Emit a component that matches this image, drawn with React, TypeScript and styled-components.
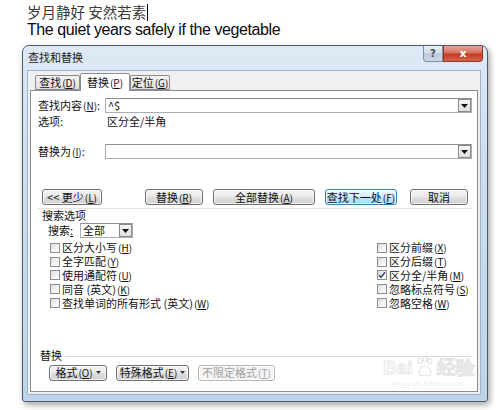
import React from 'react';
import styled, { createGlobalStyle } from 'styled-components';

const GlobalStyle = createGlobalStyle`
  html, body {
    margin: 0;
    padding: 0;
    background: #fff;
  }
  body {
    font-family: "Noto Sans CJK SC", "Liberation Sans", sans-serif;
    color: #000;
    line-height: 13px;
  }
`;

const Page = styled.div`
  position: relative;
  width: 500px;
  height: 410px;
  overflow: hidden;
  box-sizing: border-box;
  padding: 3px 0 0 22px;
`;

const Poem = styled.div`
  display: flex;
  align-items: center;
  margin-left: 5px;
  height: 18px;
  font-size: 14.5px;
  line-height: 18px;
  color: #3a3a3a;
`;

const Caret = styled.span`
  display: inline-block;
  width: 1px;
  height: 17px;
  margin-left: 1px;
  background: #000;
`;

const Subtitle = styled.div`
  margin-left: 5px;
  height: 17px;
  font-family: "Liberation Sans", Arial, sans-serif;
  font-size: 16px;
  line-height: 17px;
  color: #0a0a0a;
  letter-spacing: -0.42px;
`;

const Dialog = styled.div`
  display: flex;
  flex-direction: column;
  box-sizing: border-box;
  width: 466px;
  height: 357px;
  margin-top: 7px;
  padding: 0 6px 6px 4px;
  border: 1px solid #4d5b6a;
  border-radius: 7px 7px 3px 3px;
  background: linear-gradient(180deg, #dfe9f5 0%, #cddff1 30%, #bed4eb 100%);
  box-shadow: 2px 3px 6px rgba(0, 0, 0, 0.35);
`;

const TitleBar = styled.div`
  display: flex;
  align-items: flex-start;
  height: 24px;
`;

const TitleText = styled.span`
  margin: 5px 0 0 1px;
  font-size: 11px;
  line-height: 13px;
  color: #1a1a1a;
`;

const Controls = styled.div`
  display: flex;
  margin-left: auto;
  margin-right: -2px;
`;

const CaptionButton = styled.div<{ $close?: boolean }>`
  display: flex;
  align-items: center;
  justify-content: center;
  width: ${({ $close }) => ($close ? '40px' : '20px')};
  height: 16px;
  box-sizing: border-box;
  border: 1px solid ${({ $close }) => ($close ? '#8d3a2c' : '#7f8fa3')};
  border-top: none;
  border-radius: ${({ $close }) => ($close ? '0 0 4px 0' : '0 0 0 4px')};
  background: ${({ $close }) =>
    $close
      ? 'linear-gradient(180deg, #e8a598 0%, #d7705e 45%, #c43b22 55%, #d2654c 100%)'
      : 'linear-gradient(180deg, #e9eef5 0%, #d3dce8 45%, #bfcadb 55%, #cfd8e6 100%)'};
  color: ${({ $close }) => ($close ? '#fff' : '#3a4a5e')};
  font-family: "DejaVu Sans", sans-serif;
  font-weight: bold;
  font-size: ${({ $close }) => ($close ? '11px' : '10px')};
`;

const Client = styled.div`
  flex: 1;
  display: flex;
  flex-direction: column;
  padding: 0 2px 2px 2px;
  border: 1px solid #9fb2c7;
  background: #f0f0f0;
`;

const TabStrip = styled.div`
  display: flex;
  align-items: flex-end;
  height: 19px;
  margin-left: 5px;
  position: relative;
  z-index: 1;
`;

const Tab = styled.div<{ $w: number; $active?: boolean }>`
  display: flex;
  align-items: center;
  justify-content: center;
  box-sizing: border-box;
  width: ${({ $w }) => $w}px;
  height: ${({ $active }) => ($active ? '18px' : '15px')};
  margin-bottom: ${({ $active }) => ($active ? '-1px' : '0')};
  border: 1px solid #898c95;
  border-bottom: ${({ $active }) => ($active ? 'none' : '1px solid #898c95')};
  border-radius: 2px 2px 0 0;
  background: ${({ $active }) =>
    $active ? '#fff' : 'linear-gradient(180deg, #f3f3f3 0%, #ebebeb 50%, #dcdcdc 100%)'};
  font-size: 11px;
  color: #111;
  white-space: nowrap;
`;

const Panel = styled.div`
  display: flex;
  flex-direction: column;
  box-sizing: border-box;
  height: 302px;
  padding: 0 5px 11px 7px;
  border: 1px solid #898c95;
  background: #fff;
`;

const Row = styled.div<{ $mt: number; $h?: number; $pl?: number }>`
  display: flex;
  align-items: center;
  margin-top: ${({ $mt }) => $mt}px;
  height: ${({ $h }) => $h ?? 15}px;
  padding-left: ${({ $pl }) => $pl ?? 0}px;
  font-size: 11px;
  color: #111;
`;

const Label = styled.span<{ $w: number }>`
  width: ${({ $w }) => $w}px;
  flex-shrink: 0;
  white-space: nowrap;
`;

const Combo = styled.div<{ $w?: number }>`
  display: flex;
  align-items: center;
  box-sizing: border-box;
  ${({ $w }) => ($w ? `width: ${$w}px;` : 'flex: 1;')}
  height: 15px;
  padding-left: 2px;
  border: 1px solid #abadb3;
  border-top-color: #8e9096;
  background: #fff;
  font-size: 11px;
`;

const ComboText = styled.span`
  flex: 1;
`;

const DropButton = styled.div`
  display: flex;
  align-items: center;
  justify-content: center;
  box-sizing: border-box;
  width: 13px;
  height: 13px;
  border: 1px solid #8a8a8a;
  background: linear-gradient(180deg, #f6f6f6, #dedede);
`;

const Button = styled.div<{ $w: number; $ml: number; $kind?: 'default' | 'disabled' }>`
  display: flex;
  align-items: center;
  justify-content: center;
  gap: 3px;
  box-sizing: border-box;
  width: ${({ $w }) => $w}px;
  height: 16px;
  margin-left: ${({ $ml }) => $ml}px;
  border: 1px solid
    ${({ $kind }) => ($kind === 'default' ? '#3c7fb1' : $kind === 'disabled' ? '#b5b8bb' : '#707070')};
  border-radius: 3px;
  background: ${({ $kind }) =>
    $kind === 'default'
      ? 'linear-gradient(180deg, #eaf6fd 0%, #d9f0fc 45%, #bee6fd 55%, #a7d9f5 100%)'
      : $kind === 'disabled'
        ? '#f4f4f4'
        : 'linear-gradient(180deg, #f2f2f2 0%, #ebebeb 45%, #dddddd 55%, #cfcfcf 100%)'};
  box-shadow: inset 0 0 0 1px rgba(255, 255, 255, 0.7);
  font-size: 11px;
  color: ${({ $kind }) => ($kind === 'disabled' ? '#a2a2a2' : '#111')};
  white-space: nowrap;
`;

const Separator = styled.div`
  margin-top: 3px;
  height: 1px;
  background: #e2e2e2;
`;

const GroupLabel = styled.div`
  height: 12px;
  margin-left: 4px;
  font-size: 11px;
  line-height: 12px;
  color: #111;
`;

const CheckGrid = styled.div`
  display: grid;
  grid-template-columns: 327px 1fr;
  grid-auto-flow: column;
  grid-template-rows: repeat(5, 13.8px);
  margin-top: 3px;
  padding-left: 12px;
`;

const CheckItem = styled.label`
  display: flex;
  align-items: center;
  gap: 2px;
  font-size: 11px;
  line-height: 13px;
  color: #111;
  white-space: nowrap;
`;

const Box = styled.span`
  display: flex;
  align-items: center;
  justify-content: center;
  box-sizing: border-box;
  width: 10px;
  height: 10px;
  border: 1px solid #8f8f8f;
  background: linear-gradient(135deg, #dcdcdc 0%, #f4f4f4 60%, #fff 100%);
`;

const BottomSection = styled.div`
  margin-top: auto;
`;

const SectionHead = styled.div`
  display: flex;
  align-items: center;
  gap: 3px;
  height: 12px;
  margin-left: 2px;
  font-size: 11px;
  color: #111;

  &::after {
    content: '';
    flex: 1;
    height: 1px;
    margin-top: 3px;
    background: #dcdcdc;
  }
`;

const Caption = styled.span`
  display: inline-block;
  height: 13px;
  line-height: 13px;
`;

const Key = styled.span`
  display: inline-block;
  height: 13px;
  margin-left: 1px;
  font-size: 10px;
  line-height: 13px;
`;

const Watermark = styled.div`
  position: absolute;
  left: 383px;
  top: 356px;
  display: flex;
  flex-direction: column;
  align-items: center;
  color: rgba(255, 255, 255, 0.9);
  opacity: 0.35;
  pointer-events: none;
`;

const MarkLine = styled.div`
  display: flex;
  align-items: flex-end;
  gap: 2px;
  font-family: "Liberation Sans", sans-serif;
  font-size: 19px;
  font-weight: bold;
  line-height: 20px;
  -webkit-text-stroke: 1px #b8b8b8;
`;

const MarkSmall = styled.div`
  margin-top: 2px;
  font-family: "Liberation Sans", sans-serif;
  font-size: 7px;
  line-height: 8px;
  letter-spacing: 1px;
  color: #c8c8c8;
`;

const Arrow = () => (
  <svg width="7" height="4" viewBox="0 0 7 4">
    <path d="M0 0h7L3.5 4z" fill="#111" />
  </svg>
);

const SmallArrow = () => (
  <svg width="5" height="3" viewBox="0 0 5 3">
    <path d="M0 0h5L2.5 3z" fill="#333" />
  </svg>
);

const Check = () => (
  <svg width="8" height="8" viewBox="0 0 8 8">
    <path d="M1 4.2L3 6.3 7 1.3" fill="none" stroke="#24407a" strokeWidth="1.4" />
  </svg>
);

// a label with its access key, e.g. 查找(D), kept as one inline run
const T = ({ text, k, after }: { text: string; k?: string; after?: string }) => (
  <Caption>
    {text}
    {k && (
      <Key>
        (<u>{k}</u>)
      </Key>
    )}
    {after}
  </Caption>
);

const leftChecks = [
  ['区分大小写', 'H'],
  ['全字匹配', 'Y'],
  ['使用通配符', 'U'],
  ['同音 (英文)', 'K'],
  ['查找单词的所有形式 (英文)', 'W'],
];

const rightChecks = [
  ['区分前缀', 'X', false],
  ['区分后缀', 'T', false],
  ['区分全/半角', 'M', true],
  ['忽略标点符号', 'S', false],
  ['忽略空格', 'W', false],
] as const;

export default function App() {
  return (
    <Page>
      <GlobalStyle />
      <Poem>
        岁月静好 安然若素
        <Caret />
      </Poem>
      <Subtitle>The quiet years safely if the vegetable</Subtitle>

      <Dialog>
        <TitleBar>
          <TitleText>查找和替换</TitleText>
          <Controls>
            <CaptionButton>?</CaptionButton>
            <CaptionButton $close>x</CaptionButton>
          </Controls>
        </TitleBar>

        <Client>
          <TabStrip>
            <Tab $w={45}>
              <T text="查找" k="D" />
            </Tab>
            <Tab $w={50} $active>
              <T text="替换" k="P" />
            </Tab>
            <Tab $w={40}>
              <T text="定位" k="G" />
            </Tab>
          </TabStrip>

          <Panel>
            <Row $mt={7}>
              <Label $w={67}>
                <T text="查找内容" k="N" after=":" />
              </Label>
              <Combo>
                <ComboText>^$</ComboText>
                <DropButton>
                  <Arrow />
                </DropButton>
              </Combo>
            </Row>
            <Row $mt={1} $h={14}>
              <Label $w={69}>选项:</Label>
              <span>区分全/半角</span>
            </Row>
            <Row $mt={16}>
              <Label $w={67}>
                <T text="替换为" k="I" after=":" />
              </Label>
              <Combo>
                <ComboText />
                <DropButton>
                  <Arrow />
                </DropButton>
              </Combo>
            </Row>

            <Row $mt={30} $h={16} $pl={4}>
              <Button $w={60} $ml={0}>
                <T text="<< 更少" k="L" />
              </Button>
              <Button $w={58} $ml={43}>
                <T text="替换" k="R" />
              </Button>
              <Button $w={102} $ml={10}>
                <T text="全部替换" k="A" />
              </Button>
              <Button $w={72} $ml={10} $kind="default">
                <T text="查找下一处" k="F" />
              </Button>
              <Button $w={58} $ml={13}>
                取消
              </Button>
            </Row>

            <Separator />
            <GroupLabel>搜索选项</GroupLabel>
            <Row $mt={2} $pl={10}>
              <Label $w={32}>
                搜索<u>:</u>
              </Label>
              <Combo $w={53}>
                <ComboText>全部</ComboText>
                <DropButton>
                  <Arrow />
                </DropButton>
              </Combo>
            </Row>

            <CheckGrid>
              {leftChecks.map(([text, key]) => (
                <CheckItem key={text}>
                  <Box />
                  <T text={text} k={key} />
                </CheckItem>
              ))}
              {rightChecks.map(([text, key, on]) => (
                <CheckItem key={text}>
                  <Box>{on && <Check />}</Box>
                  <T text={text} k={key} />
                </CheckItem>
              ))}
            </CheckGrid>

            <BottomSection>
              <SectionHead>替换</SectionHead>
              <Row $mt={4} $pl={11}>
                <Button $w={58} $ml={0}>
                  <T text="格式" k="O" />
                  <SmallArrow />
                </Button>
                <Button $w={73} $ml={9}>
                  <T text="特殊格式" k="E" />
                  <SmallArrow />
                </Button>
                <Button $w={77} $ml={9} $kind="disabled">
                  <T text="不限定格式" k="T" />
                </Button>
              </Row>
            </BottomSection>
          </Panel>
        </Client>
      </Dialog>

      <Watermark>
        <MarkLine>
          <span>Bai</span>
          <svg width="20" height="22" viewBox="0 0 20 22">
            <g fill="none" stroke="#b8b8b8" strokeWidth="1.2">
              <ellipse cx="5" cy="5" rx="2" ry="2.6" />
              <ellipse cx="10" cy="3" rx="2" ry="2.6" />
              <ellipse cx="15" cy="5" rx="2" ry="2.6" />
              <path d="M4 18c0-5 3-8 6-8s6 3 6 8c0 2-3 2-6 1-3 1-6 1-6-1z" />
            </g>
          </svg>
          <span>经验</span>
        </MarkLine>
        <MarkSmall>jingyan.baidu.com</MarkSmall>
      </Watermark>
    </Page>
  );
}
